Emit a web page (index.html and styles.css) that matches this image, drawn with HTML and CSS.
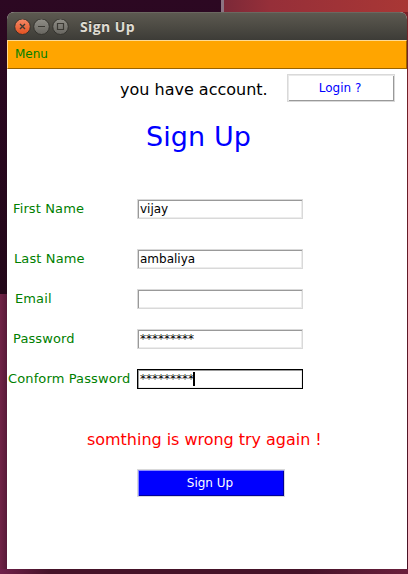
FILE: index.html
```html
<!DOCTYPE html>
<html lang="en">
<head>
<meta charset="utf-8">
<title>Sign Up</title>
<link rel="stylesheet" href="styles.css">
</head>
<body>
<div class="desktop">
<main class="window">
  <header class="titlebar">
    <svg class="controls" width="56" height="18" viewBox="0 0 56 18">
      <defs>
        <linearGradient id="close" x2="0" y2="1"><stop stop-color="#f58a68"/><stop offset="1" stop-color="#e2501f"/></linearGradient>
        <linearGradient id="grey" x2="0" y2="1"><stop stop-color="#918f88"/><stop offset="1" stop-color="#67655f"/></linearGradient>
      </defs>
      <g stroke="#34332e">
        <circle cx="8.5" cy="7.7" r="7.8" fill="url(#close)"/>
        <circle cx="27.5" cy="7.7" r="7.8" fill="url(#grey)"/>
        <circle cx="46.5" cy="7.7" r="7.8" fill="url(#grey)"/>
      </g>
      <g fill="none" stroke="#3b3933" stroke-width="1.2">
        <path d="M6 5l5 5M11 5l-5 5" stroke-width="1.4"/>
        <path d="M24 7.5h7"/>
        <path d="M43.5 4.5h6v6h-6z"/>
      </g>
    </svg>
    <span class="window-title">Sign Up</span>
  </header>
  <nav class="menubar">Menu</nav>
  <section class="account">
    <span class="hint">you have account.</span>
    <button class="button login">Login ?</button>
  </section>
  <h1 class="heading">Sign Up</h1>
  <form class="form">
    <div class="row spaced"><label class="label first" for="first">First Name</label><input class="entry" id="first" value="vijay"></div>
    <div class="row"><label class="label last" for="last">Last Name</label><input class="entry" id="last" value="ambaliya"></div>
    <div class="row"><label class="label email" for="email">Email</label><input class="entry" id="email"></div>
    <div class="row"><label class="label pass" for="pass">Password</label><input class="entry" id="pass" value="*********"></div>
    <div class="row"><label class="label confirm" for="confirm">Conform Password</label><div class="entry focused" id="confirm">*********<span class="caret"></span></div></div>
  </form>
  <p class="error">somthing is wrong try again !</p>
  <button class="button submit">Sign Up</button>
</main>
</div>
</body>
</html>
```
FILE: styles.css
```css
* { box-sizing: border-box; }
body {
  margin: 0;
  font-family: "DejaVu Sans", sans-serif;
  font-size: 12px;
}
.desktop {
  width: 408px;
  height: 574px;
  padding: 12px 1px 5px 7px;
  overflow: hidden;
  background:
    linear-gradient(90deg, #70204a, #451329 12%, #451329 75%, #6b1f3c) 0 569px / 408px 5px no-repeat,
    linear-gradient(#2c0822, #230719) 0 0 / 221px 294px no-repeat,
    linear-gradient(#8c7482, #8c7482) 221px 0 / 3px 12px no-repeat,
    linear-gradient(90deg, #7c2938, #962f39 25%, #a93735) 224px 0 / 184px 12px no-repeat,
    linear-gradient(#7a2228, #4a1326) 407px 12px / 1px 557px no-repeat,
    linear-gradient(90deg, #702346, #581a39) 0 294px / 7px 275px no-repeat,
    #7a2228;
}
.window {
  width: 400px;
  height: 557px;
  border-radius: 7px 7px 0 0;
  background: #fff;
  overflow: hidden;
}
.titlebar {
  display: flex;
  height: 28px;
  padding: 6px 0 0 7px;
  background: linear-gradient(#5c5950, #3d3c37);
  border-top: 1px solid #6b6860;
}
.controls { flex: none; }
.window-title {
  margin: -1px 0 0 10px;
  color: #dfdbd2;
  font: bold 14px/18px "Open Sans", sans-serif;
  letter-spacing: 0.4px;
  text-shadow: 0 -1px #2d2c28;
}
.menubar {
  height: 29px;
  padding-left: 7px;
  line-height: 26px;
  color: green;
  background: orange;
  border: 1px solid #996300;
  border-color: #ffdb92 #996300 #996300 #ffdb92;
}
.account {
  display: flex;
  height: 33px;
  padding: 5px 12px 0 113px;
  justify-content: space-between;
}
.hint { margin-top: 1px; font-size: 16px; line-height: 30px; white-space: nowrap; }
.button {
  height: 28px;
  padding: 0 2px 0 0;
  font: 12px "DejaVu Sans", sans-serif;
}
.login {
  width: 108px;
  color: blue;
  background: #fff;
  border: 1px solid #d9d9d9;
  box-shadow: inset 1px 1px #e9e9e9, inset -1px -1px #999;
}
.heading {
  margin: 0;
  padding-left: 139px;
  height: 97px;
  color: blue;
  font-size: 27px;
  font-weight: normal;
  letter-spacing: 0.1px;
  line-height: 70px;
}
.row { display: flex; height: 40px; }
.row.spaced { height: 50px; }
.label {
  width: 130px;
  color: green;
  font-size: 13px;
  letter-spacing: 0.12px;
  line-height: 20px;
  white-space: nowrap;
}
.first, .pass { padding-left: 6px; }
.last { padding-left: 7px; }
.email { padding-left: 8px; }
.confirm { padding-left: 1px; }
.entry {
  width: 166px;
  height: 20px;
  padding: 0 2px;
  border: 1px solid #d9d9d9;
  box-shadow: inset 1px 1px #999, inset -1px -1px #ececec;
  background: #fff;
  color: #000;
  font: 12px/18px "DejaVu Sans", sans-serif;
  outline: none;
}
.focused { display: flex; border-color: #000; }
.caret { width: 2px; height: 14px; margin: 2px 0 0 -1px; background: #000; }
.error {
  margin: 0;
  padding: 19px 0 0 80px;
  height: 60px;
  color: red;
  font-size: 16px;
  letter-spacing: -0.03px;
  line-height: 24px;
}
.submit {
  display: block;
  width: 148px;
  margin-left: 130px;
  color: #fff;
  background: blue;
  border: 1px solid #d9d9d9;
  box-shadow: inset 1px 1px #8a8aff, inset -1px -1px #000099;
}
```
